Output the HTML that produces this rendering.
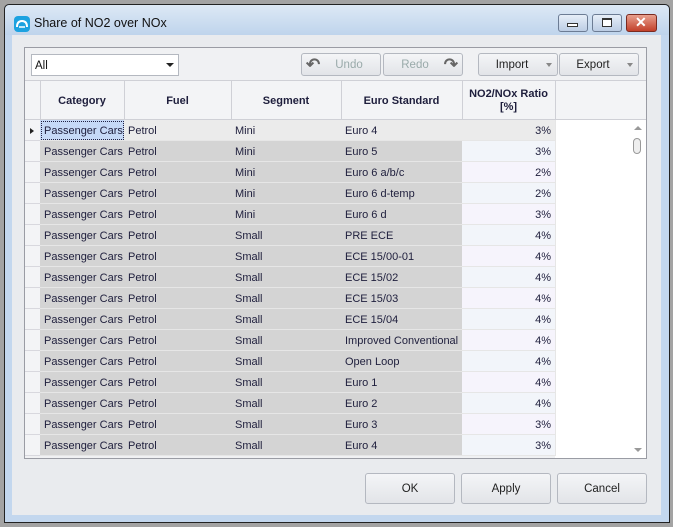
<!DOCTYPE html><html><head><style>
*{margin:0;padding:0;box-sizing:border-box}
body{width:673px;height:527px;background:#a3a3a3;position:relative;overflow:hidden;font-family:"Liberation Sans",sans-serif;font-size:11px;color:#1e1e3c}
.a{position:absolute}
.btn{position:absolute;border:1px solid #b4b8c0;border-radius:3px;background:linear-gradient(#f4f5f7,#e2e4e8);text-align:center;color:#222;font-size:11.5px}
.cell{position:absolute;height:21px;line-height:23px;padding-left:4px;border-right:1px solid #e6e6e6;border-bottom:1px solid #e6e6e6;white-space:nowrap;overflow:hidden}
.hd{position:absolute;top:81px;height:39px;background:#f3f4f6;font-weight:bold;font-size:11px;display:flex;align-items:center;justify-content:center;text-align:center;line-height:13px;color:#1e1e3c;padding-top:1px}
.vl{position:absolute;top:81px;width:1px;height:39px;background:#cfd0d6}
</style></head><body>
<div class="a" style="left:4px;top:4px;width:666px;height:519px;border:1px solid #222;border-radius:5px 5px 0 0;background:#c3d7ee"></div>
<div class="a" style="left:5px;top:5px;width:664px;height:30px;border-radius:5px 5px 0 0;background:linear-gradient(#dde8f5,#bfd4ec)"></div>
<div class="a" style="left:14px;top:16px;width:16px;height:16px;border-radius:4px;background:#1ca2e0"></div>
<svg class="a" style="left:14px;top:16px" width="16" height="16"><path d="M3 11 Q3 5 8 5 Q13 5 13 11" stroke="#fff" stroke-width="2" fill="none"/><path d="M5 11h6" stroke="#fff" stroke-width="1.5"/></svg>
<div class="a" style="left:34px;top:16px;font-size:12.5px;color:#111">Share of NO2 over NOx</div>
<div class="a" style="left:558px;top:14px;width:30px;height:18px;border:1px solid #6c7c94;border-radius:3px;background:linear-gradient(#e6eef8,#bccde4)"></div>
<div class="a" style="left:567px;top:23px;width:11px;height:4px;border:1px solid #333;background:#fff"></div>
<div class="a" style="left:592px;top:14px;width:30px;height:18px;border:1px solid #6c7c94;border-radius:3px;background:linear-gradient(#e6eef8,#bccde4)"></div>
<div class="a" style="left:602px;top:18px;width:10px;height:9px;border:1px solid #333;border-top-width:2px;background:#fff"></div>
<div class="a" style="left:626px;top:14px;width:31px;height:18px;border:1px solid #7a2a20;border-radius:3px;background:linear-gradient(#e8a08e,#c2402a)"></div>
<div class="a" style="left:635px;top:14px;color:#fff;font-weight:bold;font-size:14px">✕</div>
<div class="a" style="left:12px;top:35px;width:649px;height:480px;background:#e9ebee"></div>
<div class="a" style="left:24px;top:47px;width:623px;height:412px;border:1px solid #9a9ca4;background:#f0f1f3"></div>
<div class="a" style="left:31px;top:54px;width:148px;height:22px;border:1px solid #b4b8c0;background:#fff;padding:5px 3px;color:#111;font-size:11.5px">All</div>
<div class="a" style="left:166px;top:63px;border:4px solid transparent;border-top:4px solid #222"></div>
<div class="btn" style="left:301px;top:53px;width:80px;height:23px;line-height:23px;color:#9aa"><span style="position:absolute;left:4px;top:-1px;font-size:17px;font-weight:bold;color:#666">↶</span><span style="margin-left:16px">Undo</span></div>
<div class="btn" style="left:383px;top:53px;width:80px;height:23px;line-height:23px;color:#9aa"><span style="margin-right:16px">Redo</span><span style="position:absolute;right:4px;top:-1px;font-size:17px;font-weight:bold;color:#666">↷</span></div>
<div class="btn" style="left:478px;top:53px;width:80px;height:23px;line-height:23px"><span style="margin-right:12px">Import</span><span style="position:absolute;right:5px;top:9px;border:3px solid transparent;border-top:4px solid #888"></span></div>
<div class="btn" style="left:559px;top:53px;width:80px;height:23px;line-height:23px"><span style="margin-right:12px">Export</span><span style="position:absolute;right:5px;top:9px;border:3px solid transparent;border-top:4px solid #888"></span></div>
<div class="a" style="left:25px;top:80px;width:621px;height:1px;background:#cfd0d6"></div>
<div class="hd" style="left:25px;width:621px"></div>
<div class="hd" style="left:40px;width:84px">Category</div>
<div class="hd" style="left:124px;width:107px">Fuel</div>
<div class="hd" style="left:231px;width:110px">Segment</div>
<div class="hd" style="left:341px;width:121px">Euro Standard</div>
<div class="hd" style="left:462px;width:93px">NO2/NOx Ratio<br>[%]</div>
<div class="vl" style="left:40px"></div><div class="vl" style="left:124px"></div><div class="vl" style="left:231px"></div><div class="vl" style="left:341px"></div><div class="vl" style="left:462px"></div><div class="vl" style="left:555px"></div>
<div class="a" style="left:25px;top:119px;width:621px;height:1px;background:#cfd0d6"></div>
<div class="a" style="left:555px;top:120px;width:75px;height:338px;background:#fff"></div>
<div class="a" style="left:630px;top:120px;width:16px;height:338px;background:#fff"></div>
<div class="a" style="left:634px;top:126px;border:4px solid transparent;border-bottom:4px solid #999;border-top:none"></div>
<div class="a" style="left:633px;top:138px;width:8px;height:16px;border:1px solid #999;border-radius:4px;background:#eee"></div>
<div class="a" style="left:634px;top:448px;border:4px solid transparent;border-top:4px solid #999;border-bottom:none"></div>
<div id="rows"></div>
<script>
var d=[["Mini","Euro 4","3%"],["Mini","Euro 5","3%"],["Mini","Euro 6 a/b/c","2%"],["Mini","Euro 6 d-temp","2%"],["Mini","Euro 6 d","3%"],["Small","PRE ECE","4%"],["Small","ECE 15/00-01","4%"],["Small","ECE 15/02","4%"],["Small","ECE 15/03","4%"],["Small","ECE 15/04","4%"],["Small","Improved Conventional","4%"],["Small","Open Loop","4%"],["Small","Euro 1","4%"],["Small","Euro 2","4%"],["Small","Euro 3","3%"],["Small","Euro 4","3%"]];
var h="";d.forEach(function(r,i){var y=120+i*21;var bg=i==0?"#ebebeb":"#d4d4d4";var rb=i==0?"#ebebeb":(i%2?"#f2f5fa":"#f6f4fc");
h+='<div class="cell" style="left:25px;top:'+y+'px;width:16px;background:#f3f4f6;border-color:#d8d8de">'+(i==0?'<span style="position:absolute;left:5px;top:8px;border:3px solid transparent;border-left:4px solid #222"></span>':'')+'</div>';
h+='<div class="cell" style="left:40px;top:'+y+'px;width:85px;background:'+(i==0?'#c6d9f7;outline:1px dotted #224;outline-offset:-2px':bg)+'">Passenger Cars</div>';
h+='<div class="cell" style="left:124px;top:'+y+'px;width:108px;background:'+bg+'">Petrol</div>';
h+='<div class="cell" style="left:231px;top:'+y+'px;width:111px;background:'+bg+'">'+r[0]+'</div>';
h+='<div class="cell" style="left:341px;top:'+y+'px;width:122px;background:'+bg+'">'+r[1]+'</div>';
h+='<div class="cell" style="left:462px;top:'+y+'px;width:94px;background:'+rb+';text-align:right;padding-right:4px">'+r[2]+'</div>';});
document.getElementById("rows").innerHTML=h;
</script>
<div class="a" style="left:24px;top:458px;width:623px;height:1px;background:#9a9ca4"></div>
<div class="a" style="left:24px;top:459px;width:623px;height:10px;background:#e9ebee"></div>
<div class="btn" style="left:365px;top:473px;width:90px;height:31px;line-height:31px">OK</div>
<div class="btn" style="left:461px;top:473px;width:90px;height:31px;line-height:31px">Apply</div>
<div class="btn" style="left:557px;top:473px;width:90px;height:31px;line-height:31px">Cancel</div>
</body></html>
